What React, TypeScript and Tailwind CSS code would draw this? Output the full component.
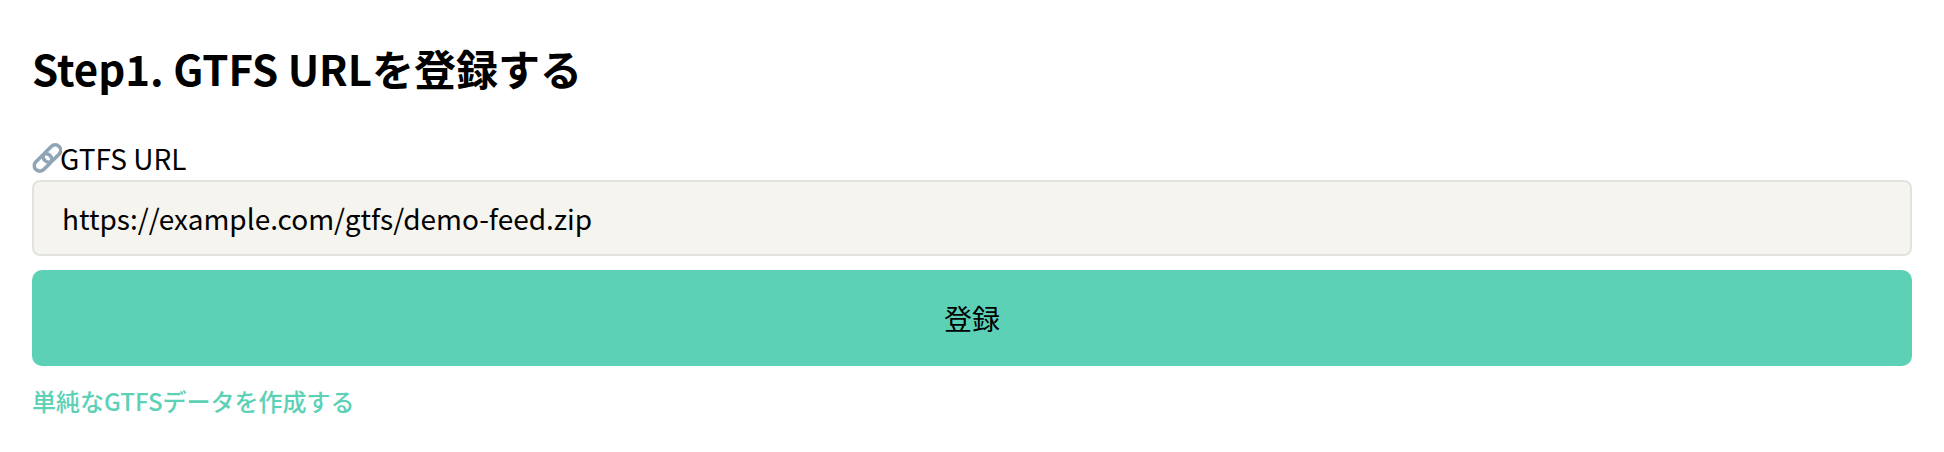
export default function App() {
  return (
    <div className="w-[1944px] h-[452px] bg-white px-8 text-black font-['Noto_Sans_CJK_JP','Noto_Sans',sans-serif] overflow-hidden">
      <h1 className="pt-[42px] text-[42px] leading-[52px] font-bold">Step1. GTFS URLを登録する</h1>
      <label className="mt-[44px] flex items-center h-[40px] text-[28px] leading-[40px]">
        <svg width="30" height="30" viewBox="0 0 30 30" fill="none" stroke="#8fa5b5" strokeWidth="3.6" className="shrink-0 -mr-[2px]">
          <rect x="10" y="5" width="20" height="11" rx="5.5" transform="rotate(-45 20 10.5)" />
          <rect x="1" y="14" width="20" height="11" rx="5.5" transform="rotate(-45 11 19.5)" />
        </svg>
        <span>GTFS URL</span>
      </label>
      <input
        readOnly
        value="https://example.com/gtfs/demo-feed.zip"
        className="mt-[2px] block w-full h-[76px] px-[28px] text-[28px] bg-[#f5f4ef] border-2 border-[#e2e2de] rounded-lg outline-none"
      />
      <button className="mt-[14px] block w-full h-[96px] bg-[#5cd1b6] rounded-[10px] text-[28px]">登録</button>
      <a className="mt-[18px] block text-[24px] leading-[34px] font-medium text-[#5cd1b6]">単純なGTFSデータを作成する</a>
    </div>
  );
}
